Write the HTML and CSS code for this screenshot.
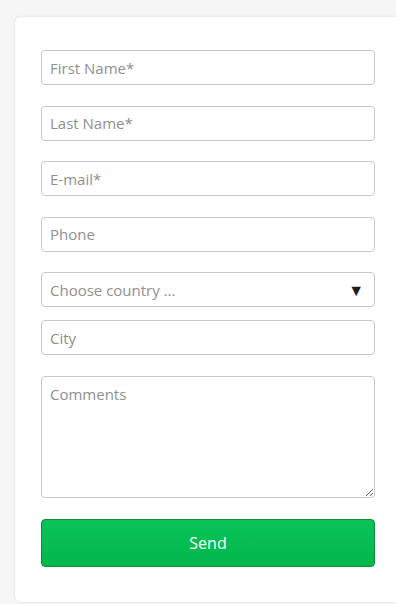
FILE: index.html
```html
<!DOCTYPE html>
<html lang="en">
<head>
    <meta charset="UTF-8">
    <meta name="viewport" content="width=device-width, initial-scale=1.0">
    <title>Contact Form</title>
    <link rel="stylesheet" href="styles.css">
</head>
<body>

    <!-- Contact Form -->
    <div class="page">
        <div class="card">
            <form class="contact-form">
                <input type="text" name="firstName" placeholder="First Name*">
                <input type="text" name="lastName" placeholder="Last Name*">
                <input type="email" name="email" placeholder="E-mail*">
                <input type="tel" name="phone" placeholder="Phone">
                <div class="select-wrap">
                    <select name="country">
                        <option value="">Choose country ...</option>
                    </select>
                    <span class="arrow">&#9660;</span>
                </div>
                <input type="text" name="city" placeholder="City" class="city">
                <textarea name="comments" placeholder="Comments"></textarea>
                <button type="button">Send</button>
            </form>
        </div>
    </div>

</body>
</html>
```
FILE: styles.css
```css
/* Common Styles */
* {
    margin: 0;
    padding: 0;
    box-sizing: border-box;
    font-family: "Open Sans", Arial, sans-serif;
}

body {
    background-color: #f6f6f6;
    height: 100vh;
    overflow: hidden;
}

.page {
    padding: 17px 0 0 15px;
}

.card {
    width: 381px;
    padding: 33px 26px 35px;
    background: #fff;
    border-radius: 6px 0 0 6px;
    box-shadow: 0 0 3px rgba(0, 0, 0, 0.12);
}

.contact-form {
    width: 334px;
    display: flex;
    flex-direction: column;
}

input,
select,
textarea {
    width: 100%;
    height: 35px;
    padding: 0 8px;
    border: 1px solid #c8c8c8;
    border-radius: 4px;
    font-size: 15px;
    color: #333;
    background: #fff;
    margin-bottom: 20.5px;
}

input::placeholder,
textarea::placeholder {
    color: #8f8f8f;
}

.select-wrap {
    position: relative;
    margin-bottom: 13px;
}

select {
    appearance: none;
    -webkit-appearance: none;
    color: #8f8f8f;
    margin-bottom: 0;
}

.arrow {
    position: absolute;
    right: 11px;
    top: 7px;
    font-size: 16px;
    color: #1e1e1e;
    pointer-events: none;
}

.city {
    margin-bottom: 21px;
}

textarea {
    height: 122px;
    padding: 7px 8px;
    resize: vertical;
    margin-bottom: 21px;
}

button {
    width: 100%;
    height: 48px;
    background: linear-gradient(#08c258, #03b84c);
    color: #fff;
    border: 1px solid #0c8c3c;
    border-radius: 4px;
    font-size: 16px;
    cursor: pointer;
}
```
